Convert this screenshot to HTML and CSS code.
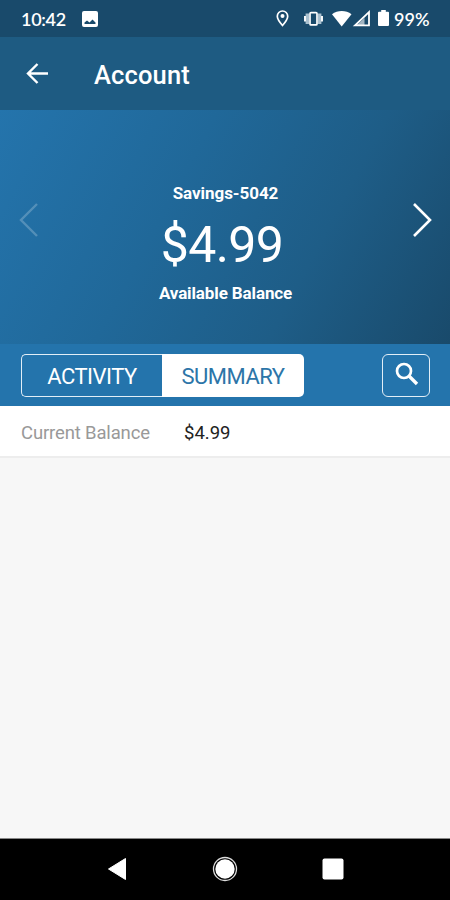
FILE: index.html
```html
<!DOCTYPE html>
<html lang="en">
<head>
<meta charset="utf-8">
<title>Account</title>
<link rel="stylesheet" href="styles.css">
</head>
<body>
<div class="screen">
  <div class="status">
    <span class="time">10:42</span>
    <svg class="photo" width="16" height="16" viewBox="0 0 16 16"><path fill="#fff" fill-rule="evenodd" d="M2 0h12a2 2 0 0 1 2 2v12a2 2 0 0 1-2 2H2a2 2 0 0 1-2-2V2a2 2 0 0 1 2-2zM2.500 13h11V11.500L10.500 8.500l-3 3L5 9.500 2.500 11.500z"/></svg>
    <svg class="indicators" width="116" height="20" viewBox="0 0 116 20">
      <path d="M7.500 2a5.200 5.200 0 0 0-5.200 5.200C2.300 10.500 7.500 16.500 7.500 16.500s5.200-6 5.200-9.300A5.200 5.200 0 0 0 7.500 2z" fill="none" stroke="#fff" stroke-width="1.700"/>
      <circle cx="7.500" cy="7" r="2" fill="#fff"/>
      <path d="M32.300 4.500v10.500M44.700 4.500v10.500" stroke="#a9c0cf" stroke-width="3.400"/>
      <rect x="35" y="3.600" width="7" height="12.300" rx="1" fill="none" stroke="#fff" stroke-width="1.700"/>
      <path d="M30 7v5.500M47 7v5.500" stroke="#fff" stroke-width="1.900"/>
      <path d="M57 5.200C62.500.8 71 .8 76.500 5.200L66.700 17.500z" fill="#fff"/>
      <path d="M80 16.300 94 3v13.300z" fill="none" stroke="#fff" stroke-width="1.800"/>
      <path d="M82 16 89.500 9v7z" fill="#fff" fill-opacity=".6"/>
      <path d="M106.200 1h4.600v1.700h2.200a1 1 0 0 1 1 1V16a1 1 0 0 1-1 1h-9a1 1 0 0 1-1-1V3.700a1 1 0 0 1 1-1h2.200z" fill="#fff"/>
    </svg>
    <span class="percent">99%</span>
  </div>
  <header class="appbar">
    <svg width="24" height="24" viewBox="0 0 24 24"><path d="M24 11.500H4M13.500 2 4 11.500l9.500 9.500" fill="none" stroke="#fff" stroke-width="2.400"/></svg>
    <h1>Account</h1>
  </header>
  <section class="balance">
    <svg class="prev" width="20" height="36" viewBox="0 0 20 36"><path d="M18 2 2 18l16 16" fill="none" stroke="#fff" stroke-width="2.400"/></svg>
    <div class="details">
      <div class="name">Savings-5042</div>
      <div class="amount">$4.99</div>
      <div class="caption">Available Balance</div>
    </div>
    <svg class="next" width="20" height="36" viewBox="0 0 20 36"><path d="m2 2 16 16L2 34" fill="none" stroke="#fff" stroke-width="2.600"/></svg>
  </section>
  <nav class="tabs">
    <div class="segments"><div class="segment"><span>ACTIVITY</span></div><div class="segment active"><span>SUMMARY</span></div></div>
    <div class="search"><svg width="24" height="24" viewBox="0 0 24 24"><circle cx="9" cy="9" r="7" fill="none" stroke="#fff" stroke-width="2.700"/><path d="m14 14 8 8" stroke="#fff" stroke-width="3.300"/></svg></div>
  </nav>
  <div class="row"><span class="label">Current Balance</span><span class="value">$4.99</span></div>
  <main class="empty"></main>
  <footer class="navbar">
    <svg width="20" height="24" viewBox="0 0 20 24"><path d="M1.500 12 18.500 1.500v21z" fill="#fff" stroke="#fff" stroke-linejoin="round"/></svg>
    <svg width="26" height="26" viewBox="0 0 26 26"><circle cx="13" cy="13" r="11.500" fill="none" stroke="#ddd" stroke-width="1.300"/><circle cx="13" cy="13" r="9.700" fill="#fff"/></svg>
    <svg width="22" height="22" viewBox="0 0 22 22"><rect x=".5" y=".5" width="21" height="21" rx="2" fill="#fff"/></svg>
  </footer>
</div>
</body>
</html>
```
FILE: styles.css
```css
* { box-sizing: border-box; }
body { margin: 0; font-family: Roboto, sans-serif; color: #fff; }
svg { display: block; flex: none; }
.screen { width: 450px; height: 900px; display: flex; flex-direction: column; background: #f7f7f7; overflow: hidden; }
.status { height: 37px; background: #194a6b; display: flex; align-items: center; padding: 1px 18px 0 21px; font: 600 18px/20px Lato, sans-serif; flex: none; }
.time { width: 60.500px; letter-spacing: -.3px; white-space: nowrap; }
.indicators { margin-left: 177.500px; }
.percent { margin-left: 3px; white-space: nowrap; }
.appbar { height: 73px; background: #1e5b82; display: flex; align-items: center; padding: 0 24px; flex: none; }
.appbar h1 { margin: 3px 0 0 46px; font-size: 25.500px; font-weight: 500; line-height: 30px; letter-spacing: .15px; }
.balance { height: 234px; flex: none; padding: 0 18px; display: flex; justify-content: space-between; background: linear-gradient(118deg, #2474ac 0%, #206899 38%, #1e5d87 68%, #194a6b 100%); }
.prev { margin: 92px 0 0 1px; opacity: .22; }
.next { margin-top: 92px; }
.details { margin-top: 73px; text-align: center; }
.name { font-size: 17px; font-weight: 700; line-height: 20px; letter-spacing: -.05px; }
.amount { margin: 14px -2px 0 -9px; font-size: 50px; line-height: 56px; letter-spacing: -.6px; }
.caption { margin-top: 10px; font-size: 17px; font-weight: 700; line-height: 20px; letter-spacing: -.12px; }
.tabs { height: 62px; flex: none; background: #2474ac; display: flex; align-items: center; justify-content: space-between; padding: 0 20px 0 21px; }
.segments { width: 283px; height: 43px; display: flex; }
.segment { width: 141px; border: 1.5px solid #e2eef7; border-right: 0; border-radius: 5px 0 0 5px; display: flex; align-items: center; justify-content: center; padding-top: 2px; font-size: 22px; letter-spacing: -.5px; }
.segment.active { width: 142px; background: #fff; border: 0; border-radius: 0 5px 5px 0; color: #2c75a8; }
.search { width: 48px; height: 43px; border: 1.5px solid #e2eef7; border-radius: 6px; display: flex; align-items: center; justify-content: center; padding: 0 0 3px 2px; }
.row { height: 52px; flex: none; background: #fff; border-bottom: 2px solid #ededed; display: flex; align-items: center; padding: 4px 21px 0; font-size: 18.500px; }
.label { width: 163px; color: #999; letter-spacing: -.15px; }
.value { color: #222; }
.empty { flex: 1; }
.navbar { height: 62px; flex: none; background: #000; border-top: 1px solid #888; display: flex; align-items: center; justify-content: space-between; padding: 0 106px 1px 107px; }
```
